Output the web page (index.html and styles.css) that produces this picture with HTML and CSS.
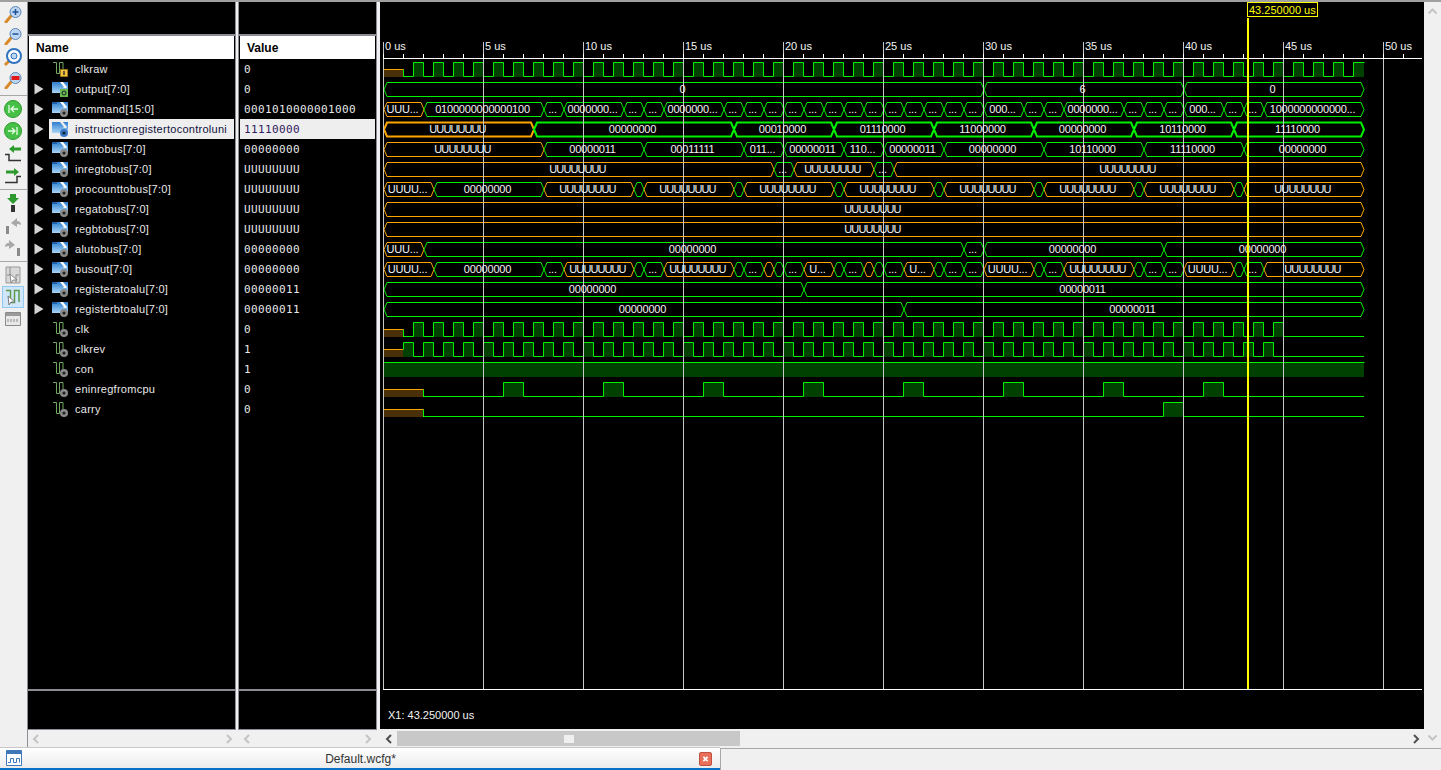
FILE: index.html
```html
<!DOCTYPE html>
<html lang="en">

<head>
    <meta charset="UTF-8">
    <title>Default.wcfg*</title>
    <link rel="stylesheet" href="styles.css">
</head>

<body>
    <svg class="defs" xmlns="http://www.w3.org/2000/svg">
        <defs>
            <linearGradient id="blue-grad" x1="0" y1="0" x2="0" y2="1">
                <stop offset="0" stop-color="#2f7fd0" />
                <stop offset="1" stop-color="#a8d4f6" />
            </linearGradient>
            <symbol id="bus" viewBox="0 0 16 16">
                <path d="M0 1h16v11H0z" fill="url(#blue-grad)" />
                <path d="M8 1h3l4 5-1 1h-3l1-1z" fill="#fff" />
                <path d="M0 1h5v2H0z" fill="#1d5fa8" />
                <circle cx="12" cy="12" r="4" fill="#8a8a8a" />
                <circle cx="12" cy="12" r="1.6" fill="#222" />
            </symbol>
            <symbol id="bus-out" viewBox="0 0 16 16">
                <path d="M0 1h16v11H0z" fill="url(#blue-grad)" />
                <path d="M8 1h3l4 5-1 1h-3l1-1z" fill="#fff" />
                <path d="M8 8h8v8H8z" fill="#6cb84a" />
                <circle cx="12" cy="12" r="2" fill="none" stroke="#123" />
            </symbol>
            <symbol id="bus-sel" viewBox="0 0 16 16">
                <path d="M0 1h16v11H0z" fill="url(#blue-grad)" />
                <path d="M8 1h3l4 5-1 1h-3l1-1z" fill="#eee" />
                <circle cx="12" cy="12" r="4" fill="#3b78c4" />
                <circle cx="12" cy="12" r="1.6" fill="#123" />
            </symbol>
            <symbol id="sig" viewBox="0 0 16 16">
                <path d="M1 1.500H4.500V12.500H7.500V1.500H11V9" fill="none" stroke="#6fa85e" />
                <circle cx="12" cy="12" r="4" fill="#8a8a8a" />
                <circle cx="12" cy="12" r="1.6" fill="#222" />
            </symbol>
            <symbol id="sig-in" viewBox="0 0 16 16">
                <path d="M1 1.500H4.500V12.500H7.500V1.500H11V9" fill="none" stroke="#6fa85e" />
                <path d="M8.500 8.500h7v7h-7z" fill="#f0c040" stroke="#a07818" />
                <path d="M12 10v4" stroke="#333" stroke-width="1.500" />
            </symbol>
            <symbol id="twist" viewBox="0 0 10 12">
                <path d="M0.500 0.500L9.500 6L0.500 11.500z" fill="#d4d4d4" />
            </symbol>
            <symbol id="lens" viewBox="0 0 20 20">
                <path d="M3 19L8 13" stroke="#d98a2b" stroke-width="3" stroke-linecap="round" />
                <circle cx="12.500" cy="9" r="5.500" fill="#bcd6f0" stroke="#5c86b8" />
            </symbol>
            <symbol id="go" viewBox="0 0 20 20">
                <circle cx="10" cy="10" r="8.500" fill="#46c046" stroke="#2c9a2c" />
            </symbol>
            <symbol id="chev" viewBox="0 0 7 10">
                <path d="M6 1L2 5L6 9" fill="none" stroke="currentColor" stroke-width="2" />
            </symbol>
        </defs>
    </svg>

    <div class="app">
        <div class="main">
            <div class="toolbar">
                <div class="tool-group first">
                    <div class="tool"><svg viewBox="0 0 20 20"><use href="#lens" /><path d="M9.500 9h6M12.500 6v6" stroke="#1d4f9a" stroke-width="1.500" /></svg></div>
                    <div class="tool"><svg viewBox="0 0 20 20"><use href="#lens" /><path d="M9.500 9h6" stroke="#1d4f9a" stroke-width="1.500" /></svg></div>
                    <div class="tool"><svg viewBox="0 0 20 20"><path d="M2 18L6 14" stroke="#d98a2b" stroke-width="3" /><circle cx="11" cy="9" r="7" fill="#fff" stroke="#2f72c0" stroke-width="2" /><circle cx="11" cy="9" r="3" fill="#bcd6f0" stroke="#2f72c0" /></svg></div>
                    <div class="tool"><svg viewBox="0 0 20 20"><use href="#lens" /><path d="M8.500 7h8v4h-8z" fill="#e01818" /></svg></div>
                </div>
                <div class="tool-group">
                    <div class="tool"><svg viewBox="0 0 20 20"><use href="#go" /><path d="M6 6v8M15 10H8M11 7l-3 3 3 3" fill="none" stroke="#e8ffe8" stroke-width="1.300" /></svg></div>
                    <div class="tool"><svg viewBox="0 0 20 20"><use href="#go" /><path d="M14 6v8M5 10h7M9 7l3 3-3 3" fill="none" stroke="#e8ffe8" stroke-width="1.300" /></svg></div>
                    <div class="tool"><svg viewBox="0 0 20 20"><path d="M2 11.500H6V17.500H18" fill="none" stroke="#333" stroke-width="1.500" /><path d="M6 6l5-4v2.500h7v3h-7V10z" fill="#2e9a2e" /></svg></div>
                    <div class="tool"><svg viewBox="0 0 20 20"><path d="M2 17.500H14V11.500H18" fill="none" stroke="#333" stroke-width="1.500" /><path d="M16 7l-5-4v2.500H3v3h8V11z" fill="#2e9a2e" /></svg></div>
                </div>
                <div class="tool-group">
                    <div class="tool"><svg viewBox="0 0 20 20"><path d="M7 1h6v4h3l-6 6-6-6h3z" fill="#2e9a2e" /><path d="M8 12h4v7H8z" fill="#333" /></svg></div>
                    <div class="tool"><svg viewBox="0 0 20 20"><path d="M3 11h3v8H3z" fill="#8a8a8a" /><path d="M8 8l6-5v3c3 0 4 2 4 4-2-1-3-1-4-1v3z" fill="#a8a8a8" /></svg></div>
                    <div class="tool"><svg viewBox="0 0 20 20"><path d="M14 11h3v8h-3z" fill="#8a8a8a" /><path d="M12 8L6 3v3c-3 0-4 2-4 4 2-1 3-1 4-1v3z" fill="#a8a8a8" /></svg></div>
                </div>
                <div class="tool-group last">
                    <div class="tool"><svg viewBox="0 0 20 20"><path d="M3 2h14v16H3z" fill="#d8d8d8" stroke="#9a9a9a" /><path d="M7 2v8H4M13 18v-8h3" fill="none" stroke="#8a8a8a" /><path d="M7 9l7 6-4 0-2 3z" fill="#fff" stroke="#888" /></svg></div>
                    <div class="tool active"><svg viewBox="0 0 20 20"><path d="M3 3.500H7.500V15.500H11.500V3.500H16V15" fill="none" stroke="#5c9a4a" stroke-width="1.500" /><path d="M5 9l7 6-4 0-2 3z" fill="#fff" stroke="#777" /></svg></div>
                    <div class="tool"><svg viewBox="0 0 20 20"><path d="M2.500 3.500h15v13h-15z" fill="#e8e8e8" stroke="#8a8a8a" /><path d="M3 4h14v3H3z" fill="#9a9a9a" /><path d="M5 10v3M8 10v3M11 10v3M14 10v3" stroke="#aaa" stroke-width="1.500" /></svg></div>
                </div>
            </div>

            <div class="work">
                <div class="work-body">
                    <div class="panes">
                        <div class="pane name-pane">
                            <div class="pane-top"></div>
                            <div class="pane-head">Name</div>
                            <div class="pane-rows">
                                <div class="row"><span class="twist"></span><div class="row-main"><svg class="ico"><use href="#sig-in" /></svg><span>clkraw</span></div></div>
                                <div class="row"><svg class="twist"><use href="#twist" /></svg><div class="row-main"><svg class="ico"><use href="#bus-out" /></svg><span>output[7:0]</span></div></div>
                                <div class="row"><svg class="twist"><use href="#twist" /></svg><div class="row-main"><svg class="ico"><use href="#bus" /></svg><span>command[15:0]</span></div></div>
                                <div class="row"><svg class="twist"><use href="#twist" /></svg><div class="row-main sel"><svg class="ico"><use href="#bus-sel" /></svg><span>instructionregistertocontroluni</span></div></div>
                                <div class="row"><svg class="twist"><use href="#twist" /></svg><div class="row-main"><svg class="ico"><use href="#bus" /></svg><span>ramtobus[7:0]</span></div></div>
                                <div class="row"><svg class="twist"><use href="#twist" /></svg><div class="row-main"><svg class="ico"><use href="#bus" /></svg><span>inregtobus[7:0]</span></div></div>
                                <div class="row"><svg class="twist"><use href="#twist" /></svg><div class="row-main"><svg class="ico"><use href="#bus" /></svg><span>procounttobus[7:0]</span></div></div>
                                <div class="row"><svg class="twist"><use href="#twist" /></svg><div class="row-main"><svg class="ico"><use href="#bus" /></svg><span>regatobus[7:0]</span></div></div>
                                <div class="row"><svg class="twist"><use href="#twist" /></svg><div class="row-main"><svg class="ico"><use href="#bus" /></svg><span>regbtobus[7:0]</span></div></div>
                                <div class="row"><svg class="twist"><use href="#twist" /></svg><div class="row-main"><svg class="ico"><use href="#bus" /></svg><span>alutobus[7:0]</span></div></div>
                                <div class="row"><svg class="twist"><use href="#twist" /></svg><div class="row-main"><svg class="ico"><use href="#bus" /></svg><span>busout[7:0]</span></div></div>
                                <div class="row"><svg class="twist"><use href="#twist" /></svg><div class="row-main"><svg class="ico"><use href="#bus" /></svg><span>registeratoalu[7:0]</span></div></div>
                                <div class="row"><svg class="twist"><use href="#twist" /></svg><div class="row-main"><svg class="ico"><use href="#bus" /></svg><span>registerbtoalu[7:0]</span></div></div>
                                <div class="row"><span class="twist"></span><div class="row-main"><svg class="ico"><use href="#sig" /></svg><span>clk</span></div></div>
                                <div class="row"><span class="twist"></span><div class="row-main"><svg class="ico"><use href="#sig" /></svg><span>clkrev</span></div></div>
                                <div class="row"><span class="twist"></span><div class="row-main"><svg class="ico"><use href="#sig" /></svg><span>con</span></div></div>
                                <div class="row"><span class="twist"></span><div class="row-main"><svg class="ico"><use href="#sig" /></svg><span>eninregfromcpu</span></div></div>
                                <div class="row"><span class="twist"></span><div class="row-main"><svg class="ico"><use href="#sig" /></svg><span>carry</span></div></div>
                            </div>
                            <div class="pane-foot"></div>
                        </div>

                        <div class="pane value-pane">
                            <div class="pane-top"></div>
                            <div class="pane-head">Value</div>
                            <div class="pane-rows">
                                <div class="val">0</div>
                                <div class="val">0</div>
                                <div class="val">0001010000001000</div>
                                <div class="val sel">11110000</div>
                                <div class="val">00000000</div>
                                <div class="val">UUUUUUUU</div>
                                <div class="val">UUUUUUUU</div>
                                <div class="val">UUUUUUUU</div>
                                <div class="val">UUUUUUUU</div>
                                <div class="val">00000000</div>
                                <div class="val">00000000</div>
                                <div class="val">00000011</div>
                                <div class="val">00000011</div>
                                <div class="val">0</div>
                                <div class="val">1</div>
                                <div class="val">1</div>
                                <div class="val">0</div>
                                <div class="val">0</div>
                            </div>
                            <div class="pane-foot"></div>
                        </div>

                        <div class="wave-pane">
                            <svg id="wave" class="wave" viewBox="380 2 1044 727"></svg>
                        </div>
                    </div>

                    <div class="scrolls">
                        <div class="scroll name-scroll">
                            <svg class="chev"><use href="#chev" /></svg>
                            <svg class="chev flip"><use href="#chev" /></svg>
                        </div>
                        <div class="scroll value-scroll">
                            <svg class="chev"><use href="#chev" /></svg>
                            <svg class="chev flip"><use href="#chev" /></svg>
                        </div>
                        <div class="scroll wave-scroll">
                            <svg class="chev on"><use href="#chev" /></svg>
                            <div class="thumb"><span class="grip"></span></div>
                            <svg class="chev on flip"><use href="#chev" /></svg>
                        </div>
                    </div>
                </div>

                <div class="vscroll">
                    <svg class="chev up"><use href="#chev" /></svg>
                    <svg class="chev down"><use href="#chev" /></svg>
                </div>
            </div>
        </div>

        <div class="tabbar">
            <div class="tab">
                <svg class="tab-ico" viewBox="0 0 16 16">
                    <path d="M0.500 0.500h15v15h-15z" fill="#fff" stroke="#3f78b8" />
                    <path d="M1 1h14v3H1z" fill="#3f78b8" />
                    <path d="M2 12.500h2.500v-4h3v4h3v-4h3v4" fill="none" stroke="#3f78b8" />
                </svg>
                <span class="tab-label">Default.wcfg*</span>
                <span class="tab-close">
                    <svg viewBox="0 0 13 14"><path d="M4 4.500l5 5M9 4.500l-5 5" stroke="#fff" stroke-width="2" /></svg>
                </span>
            </div>
            <div class="tab-rest"></div>
        </div>
    </div>
    <script src="wave.js"></script>
</body>

</html>
```

FILE: styles.css
```css
* {
    box-sizing: border-box;
}

html,
body {
    margin: 0;
    height: 100%;
    overflow: hidden;
    background: #f0f0f0;
    font-family: "Liberation Sans", Arial, sans-serif;
    font-size: 11px;
}

.defs {
    display: block;
    width: 0;
    height: 0;
}

.app {
    display: flex;
    flex-direction: column;
    width: 1441px;
    height: 770px;
    border-top: 2px solid #a0a0a0;
}

.main {
    display: flex;
    height: 745px;
}

/* left icon strip */
.toolbar {
    width: 28px;
    flex: none;
    background: #f0f0f0;
    border-right: 1px solid #8c8c94;
}

.tool-group {
    padding: 0 0 3px;
    margin-bottom: 2px;
    border-bottom: 1px solid #a8a8a8;
}

.tool-group.first {
    padding-bottom: 5px;
}

.tool-group.last {
    border-bottom: 0;
}

.tool {
    display: flex;
    align-items: center;
    justify-content: center;
    height: 22px;
    margin: 0 3px 0 2px;
}

.tool svg {
    width: 20px;
    height: 20px;
}

.tool.active {
    background: #cfe6fb;
    border: 1px solid #90c8f0;
}

.work {
    display: flex;
    flex: 1;
    min-width: 0;
}

.work-body {
    display: flex;
    flex-direction: column;
    flex: 1;
    min-width: 0;
}

.panes {
    display: flex;
    height: 728px;
}

.pane {
    display: flex;
    flex-direction: column;
    flex: none;
    background: #000;
    color: #e8e8e8;
    border-right: 1px solid #8c8c94;
    border-bottom: 1px solid #8c8c94;
}

.name-pane {
    width: 208px;
}

.value-pane {
    width: 139px;
    margin-left: 2px;
    border-left: 1px solid #8c8c94;
}

.pane-top {
    height: 34px;
    flex: none;
    border-bottom: 2px solid #8c8c94;
}

.pane-head {
    height: 23px;
    flex: none;
    margin: 0 1px;
    padding-left: 7px;
    background: #fff;
    color: #000;
    font-size: 12px;
    font-weight: bold;
    line-height: 25px;
}

.pane-rows {
    flex: 1;
}

.pane-foot {
    height: 40px;
    flex: none;
    border-top: 2px solid #8c8c94;
}

.row {
    display: flex;
    align-items: center;
    height: 20px;
}

.twist {
    flex: none;
    width: 10px;
    height: 12px;
    margin: 0 5px 0 6px;
}

.row-main {
    display: flex;
    align-items: center;
    flex: 1;
    min-width: 0;
    height: 20px;
    margin-right: 1px;
    padding-left: 3px;
    overflow: hidden;
    white-space: nowrap;
    letter-spacing: 0.27px;
}

.row-main.sel {
    background: #eeeeee;
    color: #101040;
}

.ico {
    flex: none;
    width: 16px;
    height: 16px;
    margin-right: 7px;
}

.val {
    height: 20px;
    margin: 0 1px;
    padding: 1px 0 0 4px;
    font-family: "DejaVu Sans Mono", "Liberation Mono", monospace;
    font-size: 11px;
    letter-spacing: 0.38px;
    line-height: 20px;
}

.val.sel {
    background: #eeeeee;
    color: #302060;
}

/* waveform area */
.wave-pane {
    width: 1044px;
    margin-left: 3px;
    flex: none;
}

.wave {
    display: block;
    width: 1044px;
    height: 727px;
    background: #000;
    font-family: "Liberation Sans", Arial, sans-serif;
    font-size: 11px;
}

.wave text {
    fill: #f4f4f4;
}

.wave text.bus-label {
    text-anchor: middle;
    letter-spacing: -0.2px;
}

.wave text.bus-label.undef {
    letter-spacing: -0.9px;
}

.wave text.cursor-label {
    fill: #ffff00;
}

/* scrollbars */
.scrolls {
    display: flex;
    height: 17px;
    background: #f0f0f0;
}

.scroll {
    display: flex;
    align-items: center;
    justify-content: space-between;
    flex: none;
}

.name-scroll {
    width: 211px;
    padding: 0 6px 0 4px;
}

.value-scroll {
    width: 141px;
    padding: 0 8px 0 4px;
}

.wave-scroll {
    flex: 1;
    padding: 0 4px 0 5px;
}

.chev {
    flex: none;
    width: 7px;
    height: 10px;
    color: #c4c4c4;
}

.chev.on {
    color: #505050;
}

.chev.flip {
    transform: scaleX(-1);
}

.thumb {
    display: flex;
    align-items: center;
    justify-content: center;
    width: 343px;
    height: 15px;
    margin: 0 auto 0 5px;
    background: #c8c8c8;
}

.grip {
    width: 10px;
    height: 8px;
    background: #f0f0f0;
}

.vscroll {
    display: flex;
    flex-direction: column;
    align-items: center;
    justify-content: space-between;
    width: 17px;
    padding: 4px 0;
    background: #f0f0f0;
}

.chev.up {
    transform: rotate(90deg);
}

.chev.down {
    transform: rotate(-90deg);
}

/* editor tab */
.tabbar {
    display: flex;
    height: 23px;
}

.tab {
    display: flex;
    align-items: center;
    width: 720px;
    padding: 0 8px 0 6px;
    border-top: 1px solid #c8c8c8;
    border-bottom: 2px solid #0a72c4;
    background: linear-gradient(#ffffff, #ececec);
}

.tab-ico {
    flex: none;
    width: 16px;
    height: 16px;
}

.tab-label {
    flex: 1;
    margin-top: 2px;
    color: #333;
    font-size: 12px;
    text-align: center;
}

.tab-close {
    display: block;
    flex: none;
    width: 13px;
    height: 14px;
    margin-top: 1px;
    border: 1px solid #c05040;
    border-radius: 2px;
    background: #e8705a;
}

.tab-close svg {
    display: block;
    width: 11px;
    height: 12px;
}

.tab-rest {
    flex: 1;
    margin-top: 1px;
    background: #f0f0f0;
    border-top: 1px solid #a8a8a8;
    border-left: 1px solid #a8a8a8;
}
```

FILE: wave.js
```js
const svg = document.getElementById('wave');
const NS = 'http://www.w3.org/2000/svg';

const GREEN = '#00f000';
const ORANGE = '#ffa500';
const FILL = '#004000';
const BROWN = '#4a3008';
const END = 1364;

function rowY(i) {
    return 69 + i * 20;
}

function add(tag, attrs, text) {
    const el = document.createElementNS(NS, tag);
    for (const k in attrs) {
        el.setAttribute(k, attrs[k]);
    }
    if (text) {
        el.textContent = text;
    }
    svg.appendChild(el);
    return el;
}

const U = 'UUUUUUUU';
const Z = '00000000';
const D = '...';

// [end x, label, 1 = orange]
const buses = {
    1: [[984, '0'], [1184, '6'], [END, '0']],
    2: [[424, 'UUU...', 1], [544, '0100000000000100'], [564, D], [624, '0000000...'], [644, D], [664, D],
        [724, '0000000...'], [744, D], [764, D], [784, D], [804, D], [824, D], [844, D], [864, D], [884, D],
        [904, D], [924, D], [944, D], [964, D], [984, D], [1024, '000...'], [1044, D], [1064, D],
        [1124, '0000000...'], [1144, D], [1164, D], [1184, D], [1224, '000...'], [1244, D], [1264, D],
        [END, '1000000000000...']],
    3: [[534, U, 1], [734, Z], [834, '00010000'], [934, '01110000'], [1034, '11000000'], [1134, Z],
        [1234, '10110000'], [END, '11110000']],
    4: [[544, U, 1], [644, '00000011'], [744, '00011111'], [784, '011...'], [844, '00000011'], [884, '110...'],
        [944, '00000011'], [1044, Z], [1144, '10110000'], [1244, '11110000'], [END, Z]],
    5: [[774, U, 1], [794, D], [874, U, 1], [894, D], [END, U, 1]],
    6: [[434, 'UUUU...', 1], [544, Z], [634, U, 1], [644, ''], [734, U, 1], [744, ''], [834, U, 1], [844, ''],
        [934, U, 1], [944, ''], [1034, U, 1], [1044, ''], [1134, U, 1], [1144, ''], [1234, U, 1], [1244, ''],
        [END, U, 1]],
    7: [[END, U, 1]],
    8: [[END, U, 1]],
    9: [[424, 'UUU...', 1], [964, Z], [984, D], [1164, Z], [END, Z]],
    10: [[434, 'UUUU...', 1], [544, Z], [564, D], [634, U, 1], [644, ''], [664, D], [734, U, 1], [744, ''],
        [764, D], [774, '', 1], [784, ''], [804, D], [834, 'U...', 1], [844, ''], [864, D], [874, '', 1],
        [884, ''], [904, D], [934, 'U...', 1], [944, ''], [964, D], [984, D], [1034, 'UUUU...', 1], [1044, ''],
        [1064, D], [1134, U, 1], [1144, ''], [1164, D], [1184, D], [1234, 'UUUU...', 1], [1244, ''], [1264, D],
        [END, U, 1]],
    11: [[804, Z], [END, '00000011']],
    12: [[904, Z], [END, '00000011']]
};

function pulses(start, stop, step, width) {
    const list = [];
    for (let x = start; x <= stop; x += step) {
        list.push([x, x + width]);
    }
    return list;
}

const bits = [
    { row: 0, brown: 403, list: pulses(413, 1333, 20, 10).concat([[1353, END]]) },
    { row: 13, brown: 403, list: pulses(413, 1273, 20, 10) },
    { row: 14, brown: 403, list: pulses(403, 1263, 20, 10) },
    { row: 15, brown: 0, list: [[384, END]] },
    { row: 16, brown: 423, list: pulses(503, 1203, 100, 20) },
    { row: 17, brown: 423, list: [[1163, 1183]] }
];

const labels = [];

function drawBus(row, segs) {
    const c = rowY(row) + 0.5;
    const wide = row === 3 ? 2 : 1;
    let x1 = 384;
    segs.forEach(function (seg) {
        const x2 = seg[0];
        const pts = [
            [x1, c], [x1 + 3, c - 7], [x2 - 3, c - 7], [x2, c], [x2 - 3, c + 7], [x1 + 3, c + 7]
        ];
        add('polygon', {
            points: pts.map(function (p) { return p.join(','); }).join(' '),
            fill: 'none',
            stroke: seg[2] ? ORANGE : GREEN,
            'stroke-width': wide
        });
        if (seg[1]) {
            labels.push({ x: (x1 + x2) / 2 - 1.5, y: rowY(row) + 4, text: seg[1] });
        }
        x1 = x2;
    });
}

function drawBit(b) {
    const c = rowY(b.row);
    const top = c - 7 + 0.5;
    const low = c + 7 + 0.5;
    if (b.brown) {
        add('rect', { x: 384, y: c, width: b.brown - 384, height: 8, fill: BROWN });
        add('path', { d: `M384 ${c + 0.5}H${b.brown + 0.5}V${c + 8}`, fill: 'none', stroke: ORANGE });
    }
    let d = b.brown ? `M${b.brown + 0.5} ${c + 0.5}` : `M384 ${top}`;
    if (b.brown && b.list[0][0] > b.brown) {
        d += `V${low}`;
    }
    b.list.forEach(function (p) {
        add('rect', { x: p[0], y: c - 7, width: p[1] - p[0], height: 15, fill: FILL });
        d += `H${p[0] + 0.5}V${top}H${p[1] + 0.5}`;
        if (p[1] < END) {
            d += `V${low}`;
        }
    });
    const last = b.list[b.list.length - 1][1];
    if (last < END) {
        d += `H${END}`;
    }
    add('path', { d: d, fill: 'none', stroke: GREEN });
}

for (const row in buses) {
    drawBus(Number(row), buses[row]);
}
bits.forEach(drawBit);

// ruler and grid
for (let k = 0; k <= 10; k++) {
    const x = 383.5 + k * 100;
    add('path', { d: `M${x} 42V689`, stroke: '#c8c8c8' });
    add('text', { x: x + 1.5, y: 50 }, `${k * 5} us`);
}
for (let x = 383.5; x <= 1404; x += 20) {
    add('path', { d: `M${x} 54V58`, stroke: '#fff' });
}
add('path', { d: 'M383 58.500H1422', stroke: '#fff' });
add('path', { d: 'M383 689.500H1422', stroke: '#fff' });

labels.forEach(function (l) {
    const undef = l.text === U;
    add('text', { x: l.x, y: l.y, class: undef ? 'bus-label undef' : 'bus-label' }, l.text);
});

// cursor
add('rect', { x: 1247, y: 18, width: 2, height: 671, fill: '#ffff00' });
add('rect', { x: 1247.5, y: 2.500, width: 70, height: 14, fill: '#000', stroke: '#ffff00' });
add('text', { x: 1249, y: 14, class: 'cursor-label' }, '43.250000 us');

add('text', { x: 388, y: 719 }, 'X1: 43.250000 us');
```
